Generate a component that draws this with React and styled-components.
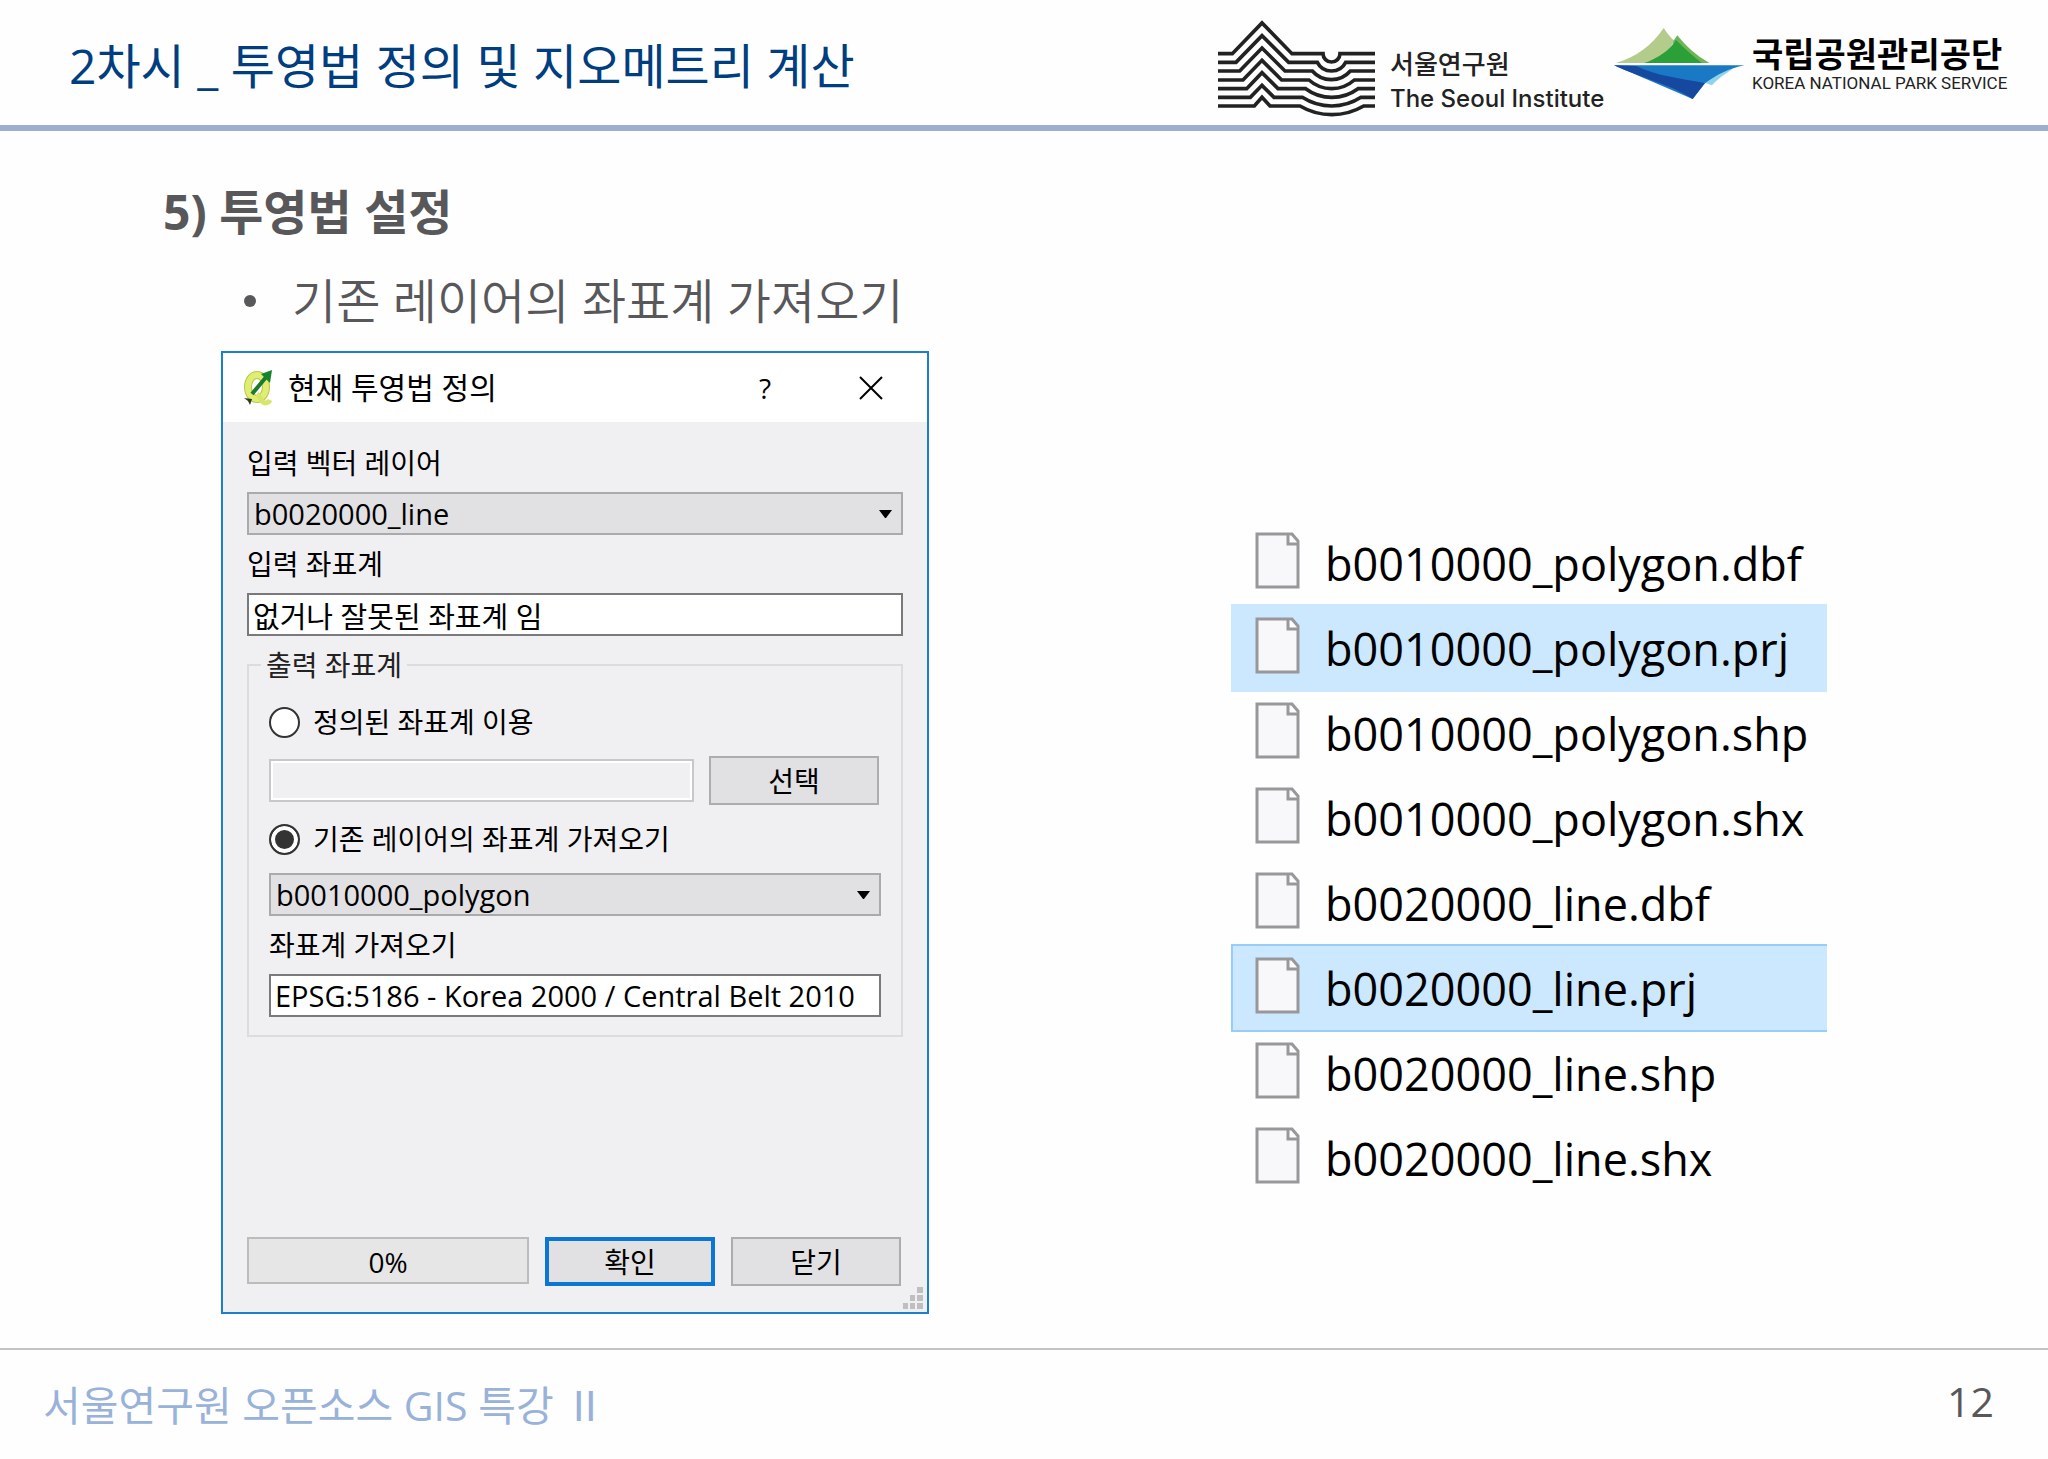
import React, { useState } from 'react';
import styled, { createGlobalStyle } from 'styled-components';

const files = [
  { name: 'b0010000_polygon.dbf' },
  { name: 'b0010000_polygon.prj', selected: true },
  { name: 'b0010000_polygon.shp' },
  { name: 'b0010000_polygon.shx' },
  { name: 'b0020000_line.dbf' },
  { name: 'b0020000_line.prj', selected: true, focused: true },
  { name: 'b0020000_line.shp' },
  { name: 'b0020000_line.shx' },
];

// each contour: baseline, peak height, feet of the mountain, edges of the valley
const contours = [
  [161, 69, 98, 277, 370, 421],
  [187, 107, 109, 267, 353, 438],
  [213, 144, 120, 256, 338, 452],
  [240, 181, 130, 246, 328, 464],
  [266, 218, 141, 235, 318, 475],
  [292, 256, 152, 223, 308, 484],
  [318, 292, 164, 211, 301, 492],
];

const contourPath = ([y, peak, left, right, from, to]) => {
  const half = (to - from) / 2;
  const r = (half * half + 26 * 26) / 52;
  return `M55 ${y}H${left}L187 ${peak}L${right} ${y}H${from}A${r} ${r} 0 0 0 ${to} ${y}H526`;
};

const SeoulMark = () => (
  <svg width="157" height="97" viewBox="55 60 471 291" fill="none" stroke="#222" strokeWidth="11" aria-hidden="true">
    {contours.map((c) => <path key={c[0]} d={contourPath(c)} />)}
  </svg>
);

const ParkMark = () => (
  <svg width="131" height="73" viewBox="44 82 393 219" aria-hidden="true">
    <path fill="#b3cc8c" d="M50 190C110 172 158 138 193 85C206 104 214 114 226 124L180 190Z" />
    <path fill="#6fb558" d="M222 124L234 107C262 142 292 168 330 190H220Z" />
    <path fill="#2b9f38" d="M135 190C180 174 210 152 230 121C258 150 284 172 308 190Z" />
    <path fill="#8fd3ea" d="M318 250C340 226 362 212 402 206C380 222 356 236 338 257Z" />
    <path fill="#1a79c4" d="M44 197H436C388 206 352 226 318 250L280 298Z" />
    <path fill="#1748a0" d="M44 197L110 199C170 228 240 236 316 250L280 298C214 254 116 232 44 197Z" />
  </svg>
);

const QgisIcon = () => (
  <svg width="30" height="38" viewBox="0 0 30 38" aria-hidden="true">
    <ellipse cx="14" cy="18" rx="9" ry="12" fill="none" stroke="#b9c747" strokeWidth="8" />
    <ellipse cx="14" cy="18" rx="9" ry="12" fill="none" stroke="#dfee72" strokeWidth="6" />
    <path d="M14 25C18 28 18 34 22 34C24 34 26 33 27 31" fill="none" stroke="#d6e668" strokeWidth="5" />
    <path d="M9 25L24 7" stroke="#1c7a2d" strokeWidth="4" />
    <path d="M18 5L29 1L27 14Z" fill="#15852b" />
    <path d="M1 29L9 30L7 36L5 32Z" fill="#2c3a20" />
  </svg>
);

const FileIcon = () => (
  <svg width="46" height="57" viewBox="0 0 46 57" aria-hidden="true">
    <path d="M2 2H37L43 9V55H2Z" fill="#f8f8fb" stroke="#98989b" strokeWidth="3" />
    <path d="M33 2V12H43" fill="#fff" stroke="#98989b" strokeWidth="3" />
  </svg>
);

const Combo = ({ id, label, value }) => (
  <ComboBox>
    <select id={id} aria-label={label} defaultValue={value}>
      <option>{value}</option>
    </select>
    <svg width="13" height="8" viewBox="0 0 13 8" aria-hidden="true"><path d="M0 0H13L7 8H6Z" /></svg>
  </ComboBox>
);

const ProjectionDialog = () => {
  const [mode, setMode] = useState('layer');

  return (
    <Dialog role="dialog" aria-labelledby="dialog-title">
      <TitleBar>
        <QgisIcon />
        <h2 id="dialog-title">현재 투영법 정의</h2>
        <button type="button">?</button>
        <button type="button" aria-label="닫기">
          <svg width="24" height="24" viewBox="0 0 24 24" stroke="#000" strokeWidth="2"><path d="M1 1L23 23M23 1L1 23" /></svg>
        </button>
      </TitleBar>
      <Form>
        <Label htmlFor="in-layer">입력 벡터 레이어</Label>
        <Combo id="in-layer" value="b0020000_line" />
        <Label htmlFor="in-crs">입력 좌표계</Label>
        <TextBox id="in-crs" defaultValue="없거나 잘못된 좌표계 임" />
        <Group>
          <legend>출력 좌표계</legend>
          <Options>
            <Radio>
              <input type="radio" name="mode" checked={mode === 'defined'} onChange={() => setMode('defined')} />
              정의된 좌표계 이용
            </Radio>
            <PickRow>
              <TextBox aria-label="정의된 좌표계" disabled />
              <Button type="button">선택</Button>
            </PickRow>
            <Radio>
              <input type="radio" name="mode" checked={mode === 'layer'} onChange={() => setMode('layer')} />
              기존 레이어의 좌표계 가져오기
            </Radio>
            <Field>
              <Combo id="from-layer" label="기존 레이어" value="b0010000_polygon" />
              <Label htmlFor="out-crs">좌표계 가져오기</Label>
              <TextBox id="out-crs" defaultValue="EPSG:5186 - Korea 2000 / Central Belt 2010" />
            </Field>
          </Options>
        </Group>
        <Actions>
          <Progress role="progressbar" aria-valuenow={0}>0%</Progress>
          <Button type="button" $primary>확인</Button>
          <Button type="button">닫기</Button>
        </Actions>
      </Form>
      <Grip width="20" height="22" viewBox="0 0 20 22" fill="#bfbfbf" aria-hidden="true">
        <path d="M14 0h6v6h-6zM7 8h5v6h-5zM14 8h6v6h-6zM0 16h5v6h-5zM7 16h5v6h-5zM14 16h6v6h-6z" />
      </Grip>
    </Dialog>
  );
};

const App = () => (
  <Slide>
    <GlobalStyle />
    <Header>
      <h1>2차시 _ 투영법 정의 및 지오메트리 계산</h1>
      <Logos>
        <SeoulMark />
        <SeoulName>
          <span>서울연구원</span>
          <span lang="en">The Seoul Institute</span>
        </SeoulName>
        <ParkBrand>
          <ParkMark />
          <ParkName>
            <span>국립공원관리공단</span>
            <span lang="en">KOREA NATIONAL PARK SERVICE</span>
          </ParkName>
        </ParkBrand>
      </Logos>
    </Header>
    <Main>
      <Heading>5) 투영법 설정</Heading>
      <Bullets>
        <li>기존 레이어의 좌표계 가져오기</li>
      </Bullets>
      <Columns>
        <ProjectionDialog />
        <FileList>
          {files.map((file) => (
            <FileRow key={file.name} $selected={file.selected} $focused={file.focused}>
              <FileIcon />
              {file.name}
            </FileRow>
          ))}
        </FileList>
      </Columns>
    </Main>
    <Footer>
      <span>서울연구원 오픈소스 GIS 특강 Ⅱ</span>
      <PageNumber>12</PageNumber>
    </Footer>
  </Slide>
);

const GlobalStyle = createGlobalStyle`
  * {
    box-sizing: border-box;
  }

  body {
    margin: 0;
    background: #fefefe;
    font-family: 'Open Sans', 'Noto Sans CJK KR', sans-serif;
  }

  h1, h2, ul {
    margin: 0;
    padding: 0;
    font-weight: 400;
  }

  button, input, select {
    font: inherit;
    color: inherit;
  }
`;

const Slide = styled.div`
  display: flex;
  flex-direction: column;
  min-height: 100vh;
`;

const Header = styled.header`
  display: flex;
  align-items: center;
  justify-content: space-between;
  height: 131px;
  padding: 0 46px 0 69px;
  border-bottom: 6px solid #9eaed0;

  h1 {
    font-size: 48px;
    line-height: 60px;
    color: #003e80;
    padding-top: 6px;
  }
`;

const Logos = styled.div`
  display: flex;
  align-items: center;
  padding-top: 12px;
`;

const SeoulName = styled.div`
  display: flex;
  flex-direction: column;
  width: 224px;
  margin-left: 15px;
  padding-top: 26px;
  font: 500 24px/34px Inter, 'Noto Sans CJK KR', sans-serif;
  color: #222;
  white-space: nowrap;

  span:first-child {
    font-size: 26px;
  }
`;

const ParkBrand = styled.div`
  display: flex;
  align-items: center;
  gap: 7px;
  padding-bottom: 10px;
`;

const ParkName = styled.div`
  display: flex;
  flex-direction: column;
  width: 250px;
  padding-top: 2px;
  font: 700 34px/36px 'Liberation Sans', 'Noto Sans CJK KR', sans-serif;
  color: #000;
  white-space: nowrap;

  span:last-child {
    font: 400 17px/20px Roboto, sans-serif;
    color: #222;
  }
`;

const Main = styled.main`
  flex: 1;
  padding: 51px 221px 34px;
`;

const Heading = styled.h2`
  && {
    margin-left: -58px;
    font-weight: 700;
  }
  font-size: 48px;
  line-height: 60px;
  color: #58575a;
`;

const Bullets = styled.ul`
  && {
    margin: 29px 0 20px;
  }
  list-style: none;

  li {
    display: flex;
    align-items: center;
    gap: 36px;
    padding-left: 23px;
    font-size: 48px;
    font-weight: 350;
    line-height: 60px;
    color: #58575a;
  }

  li::before {
    content: '';
    width: 12px;
    height: 12px;
    border-radius: 50%;
    background: #58575a;
  }
`;

const Columns = styled.div`
  display: flex;
  align-items: flex-start;
  justify-content: space-between;
  gap: 40px;
`;

const Dialog = styled.section`
  position: relative;
  display: flex;
  flex-direction: column;
  flex: 0 1 708px;
  min-height: 963px;
  border: 2px solid #1a80cc;
  background: #f0eff1;
  font-size: 28px;
  line-height: 34px;
  color: #000;
`;

const TitleBar = styled.div`
  display: flex;
  align-items: center;
  height: 69px;
  padding: 0 3px 0 20px;
  background: #fff;

  h2 {
    flex: 1;
    margin-left: 15px;
    font-size: 30px;
  }

  button {
    display: flex;
    align-items: center;
    justify-content: center;
    width: 106px;
    height: 100%;
    padding: 0;
    border: 0;
    background: none;
  }
`;

const Form = styled.form`
  display: flex;
  flex-direction: column;
  flex: 1;
  gap: 12px;
  padding: 24px 24px 26px;
`;

const Label = styled.label`
  display: block;
`;

const TextBox = styled.input`
  width: 100%;
  min-width: 0;
  height: 43px;
  padding: 0 4px;
  border: 2px solid #7a797b;
  background: #fff;
  font-size: 29px;

  &:disabled {
    border-color: #c8c8ca;
    background: #f0eff1;
    box-shadow: inset 0 0 0 2px #fff;
  }
`;

const ComboBox = styled.div`
  display: grid;
  align-items: center;

  select, svg {
    grid-area: 1 / 1;
  }

  select {
    width: 100%;
    height: 43px;
    padding: 0 5px;
    border: 2px solid #aaa9ac;
    border-radius: 0;
    background: #e1e0e2;
    font-size: 29px;
    line-height: 39px;
    appearance: none;
  }

  svg {
    justify-self: end;
    margin-right: 11px;
    pointer-events: none;
  }
`;

const Group = styled.fieldset`
  min-width: 0;
  margin: 0;
  padding: 0 20px 18px;
  border: 2px solid #dcdbdd;

  legend {
    margin-left: -8px;
    padding: 0 5px;
    color: #222;
  }
`;

const Options = styled.div`
  display: flex;
  flex-direction: column;
  gap: 17px;
  padding-top: 23px;
`;

const Radio = styled.label`
  display: flex;
  align-items: center;
  gap: 13px;

  input {
    width: 31px;
    height: 31px;
    margin: 0;
    border: 2px solid #333;
    border-radius: 50%;
    background: #fff;
    appearance: none;
  }

  input:checked {
    background: #333;
    box-shadow: inset 0 0 0 4px #fff;
  }
`;

const PickRow = styled.div`
  display: flex;
  align-items: center;
  gap: 15px;
  padding-right: 2px;
`;

const Field = styled.div`
  display: flex;
  flex-direction: column;
  gap: 12px;
`;

const Button = styled.button`
  flex: 0 0 170px;
  height: 49px;
  padding: 0;
  border: ${(props) => (props.$primary ? '4px solid #0b76d4' : '2px solid #adacae')};
  background: #e1e0e2;
`;

const Actions = styled.div`
  display: flex;
  align-items: flex-start;
  gap: 16px;
  margin-top: auto;
  padding-right: 2px;
`;

const Progress = styled.div`
  flex: 1;
  height: 47px;
  border: 2px solid #bcbcbc;
  background: #e6e6e6;
  line-height: 46px;
  text-align: center;
`;

const Grip = styled.svg`
  position: absolute;
  right: 4px;
  bottom: 3px;
`;

const FileList = styled.ul`
  flex: 0 1 596px;
  list-style: none;

  && {
    padding-top: 168px;
  }
`;

const FileRow = styled.li`
  display: flex;
  align-items: center;
  gap: 24px;
  height: 88px;
  padding: 2px 0 0 22px;
  border: 2px solid ${(props) => (props.$focused ? '#99cdf9' : 'transparent')};
  border-right: 0;
  background: ${(props) => (props.$selected ? '#cce8ff' : 'none')};
  font-size: 45px;
  line-height: 60px;
  color: #000;

  & + & {
    margin-top: -3px;
  }

  svg {
    margin-bottom: 8px;
  }
`;

const Footer = styled.footer`
  display: flex;
  align-items: center;
  justify-content: space-between;
  height: 111px;
  padding: 0 54px 0 43px;
  border-top: 2px solid #c5c2c6;
  font-size: 41px;
  line-height: 50px;
  color: #98b2d9;
`;

const PageNumber = styled.span`
  padding-bottom: 8px;
  color: #58575a;
`;

export default App;
